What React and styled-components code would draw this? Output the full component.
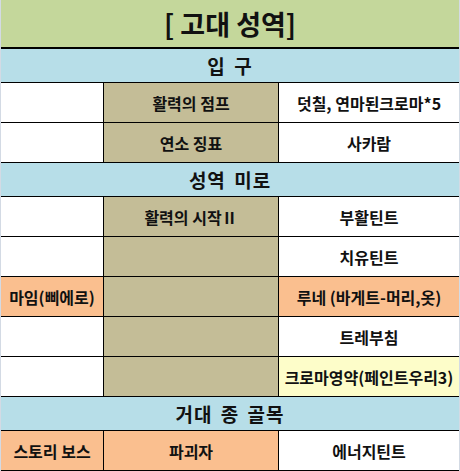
import React from 'react'
import styled, {createGlobalStyle} from 'styled-components'

const Global = createGlobalStyle`
body {
  margin: 0;
  background: #ffffff;
  font-family: "Malgun Gothic", "Noto Sans CJK KR", "Noto Sans", sans-serif;
}
`

const colors = {
  white: '#ffffff',
  tan: '#c4bd97',
  orange: '#fabf8f',
  yellow: '#fdfdc9',
}

const Sheet = styled('div')`
width: 458px;
display: flex;
flex-direction: column;
border-left: 1px solid #d3dae4;
border-right: 1px solid #d3dae4;
border-bottom: 2px solid #000;
color: #111;
`

const Title = styled('div')`
height: 47px;
display: flex;
align-items: center;
justify-content: center;
background: #c4d79b;
border-bottom: 2px solid #000;
font-size: 27px;
font-weight: 700;
`

const Section = styled('div')`
height: 33px;
display: flex;
align-items: center;
justify-content: center;
background: #b7dee8;
border-bottom: 1px solid #000;
font-size: 19px;
font-weight: 700;
letter-spacing: 1px;
word-spacing: 3px;
`

const Row = styled('div')`
height: 39px;
display: grid;
grid-template-columns: 103px 175px 1fr;
border-bottom: 1px solid #000;
`

const Cell = styled('div')`
display: flex;
align-items: center;
justify-content: center;
background: ${p => colors[p.$bg] || colors.white};
border-right: ${p => (p.$last ? 'none' : '1px solid #000')};
font-size: 16px;
font-weight: 700;
white-space: nowrap;
overflow: hidden;
`

const sections = [
  {
    name: '입 구',
    rows: [
      [['', 'white'], ['활력의 점프', 'tan'], ['덧칠, 연마된크로마*5', 'white']],
      [['', 'white'], ['연소 징표', 'tan'], ['사카람', 'white']],
    ],
  },
  {
    name: '성역 미로',
    rows: [
      [['', 'white'], ['활력의 시작Ⅱ', 'tan'], ['부활틴트', 'white']],
      [['', 'white'], ['', 'tan'], ['치유틴트', 'white']],
      [['마임(삐에로)', 'orange'], ['', 'tan'], ['루네 (바게트-머리,옷)', 'orange']],
      [['', 'white'], ['', 'tan'], ['트레부침', 'white']],
      [['', 'white'], ['', 'tan'], ['크로마영약(페인트우리3)', 'yellow']],
    ],
  },
  {
    name: '거대 종 골목',
    rows: [
      [['스토리 보스', 'orange'], ['파괴자', 'orange'], ['에너지틴트', 'white']],
    ],
  },
]

export default function App() {
  return (
    <>
      <Global />
      <Sheet>
        <Title>[ 고대 성역]</Title>
        {sections.map(s => (
          <React.Fragment key={s.name}>
            <Section>{s.name}</Section>
            {s.rows.map((r, i) => (
              <Row key={i}>
                {r.map(([text, bg], j) => (
                  <Cell key={j} $bg={bg} $last={j === 2}>{text}</Cell>
                ))}
              </Row>
            ))}
          </React.Fragment>
        ))}
      </Sheet>
    </>
  )
}
